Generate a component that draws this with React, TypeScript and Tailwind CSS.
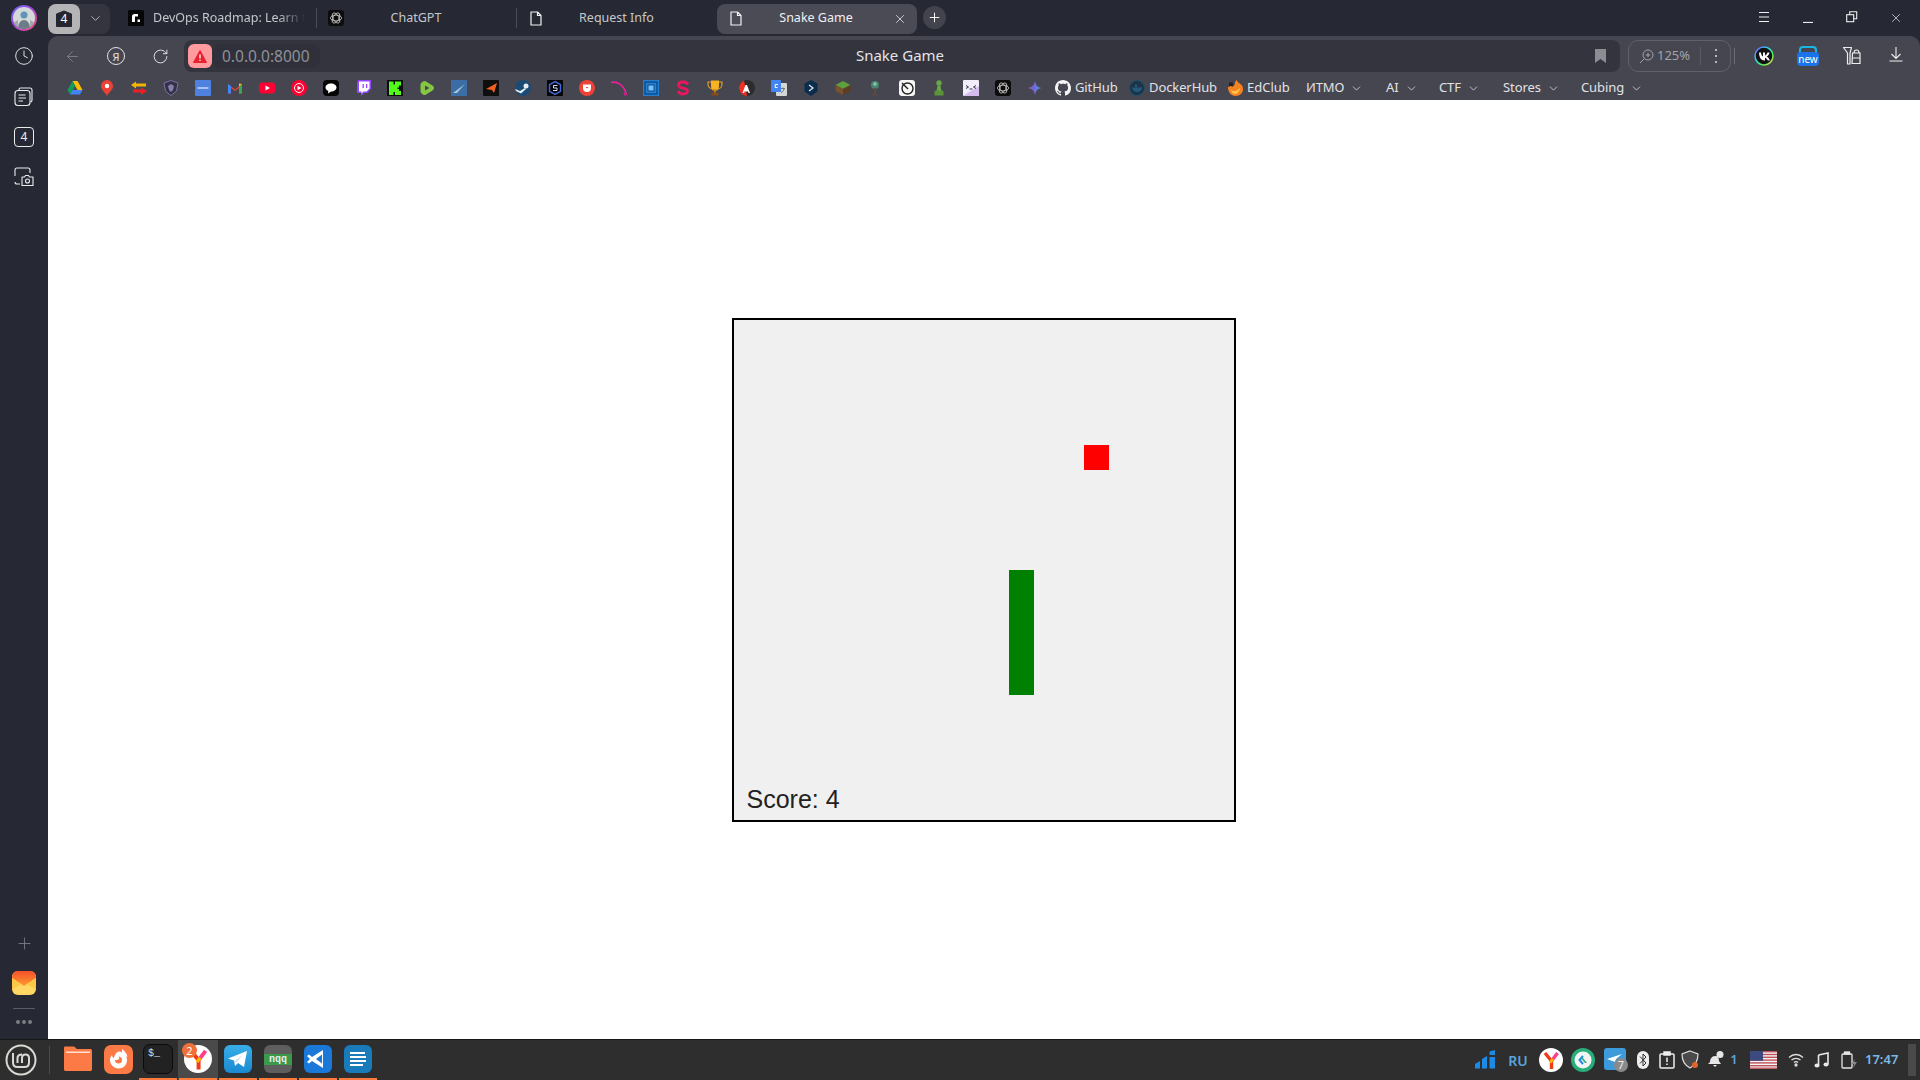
import React from "react";
import { ArrowLeft, ChevronDown, Clock, Plus, RotateCw, X } from "lucide-react";

const Svg = ({ s = 16, vb = "0 0 16 16", children }: { s?: number; vb?: string; children: React.ReactNode }) => (
  <svg width={s} height={s} viewBox={vb} className="block shrink-0">{children}</svg>
);

const PageIcon = () => (
  <svg width="12" height="15" viewBox="0 0 12 15" className="block shrink-0"><path d="M1 1h6.5L11 4.5V14H1z M7.5 1v3.5H11" fill="none" stroke="#f2f2f2" strokeWidth="1.2" strokeLinejoin="round" /></svg>
);

const OpenAi = ({ s = 16 }: { s?: number }) => (
  <Svg s={s}>
    <rect width="16" height="16" rx="3" fill="#0c0c0c" />
    <g fill="none" stroke="#cfcfcf" strokeWidth=".8">
      <ellipse cx="8" cy="8" rx="5.6" ry="2.9" />
      <ellipse cx="8" cy="8" rx="5.6" ry="2.9" transform="rotate(60 8 8)" />
      <ellipse cx="8" cy="8" rx="5.6" ry="2.9" transform="rotate(120 8 8)" />
    </g>
  </Svg>
);

const favs: React.ReactNode[] = [
  <Svg key="drive"><path d="M5.5 1h5l5 9h-5z" fill="#fbbc04" /><path d="M5.5 1 .5 10 3 14.5 8 6z" fill="#0f9d58" /><path d="M3 14.5h10l2.500-4.500h-10z" fill="#4285f4" /></Svg>,
  <Svg key="pin"><path d="M8 0a6 6 0 0 1 6 6c0 4-4 6-6 10C6 12 2 10 2 6a6 6 0 0 1 6-6z" fill="#ea4335" /><circle cx="8" cy="6" r="2.200" fill="#fff" /></Svg>,
  <Svg key="arrows"><path d="M0 5 5 1.500V3.500H15V6.500H5V8.500z" fill="#f5b400" /><path d="M16 11 10 7.500V9.500H2V12.500H10V15z" fill="#ee1c25" /></Svg>,
  <Svg key="shield"><path d="M8 .500 15 3l-1.500 8L8 15.500 2.500 11 1 3z" fill="#343048" stroke="#7a74a0" /><path d="M8 4l3 2-1 4-2 2-2-2-1-4z" fill="#8680aa" /></Svg>,
  <Svg key="dpgs"><rect width="16" height="16" rx="1" fill="#4f82e0" /><rect x="2.500" y="7" width="11" height="2" fill="#a9c2f2" /></Svg>,
  <Svg key="gmail"><path d="M1 13.500V4l7 5.500L15 4v9.500h-3V8L8 11 4 8v5.500z" fill="#ea4335" /><path d="M1 4v9.500h3V6z" fill="#4285f4" /><path d="M15 4v9.500h-3V6z" fill="#34a853" /><path d="M12 6.500 15 4v0l-3-.5z" fill="#fbbc04" /></Svg>,
  <Svg key="yt"><rect y="2.500" width="16" height="11" rx="3" fill="#ff0033" /><path d="M6.500 5.500 11 8l-4.500 2.500z" fill="#fff" /></Svg>,
  <Svg key="ytm"><circle cx="8" cy="8" r="8" fill="#ff0033" /><circle cx="8" cy="8" r="4.500" fill="none" stroke="#fff" /><path d="M6.500 5.800 10.500 8l-4 2.200z" fill="#fff" /></Svg>,
  <Svg key="chat"><rect width="16" height="16" rx="4" fill="#050505" /><path d="M8 3.500c3.300 0 5.500 1.700 5.500 4S11.300 11.500 8 11.500l-3 2 .3-2.500C3.500 10.300 2.500 9 2.500 7.500c0-2.300 2.200-4 5.500-4z" fill="#fff" /></Svg>,
  <Svg key="twitch"><path d="M3 0h13v9l-4 4H9l-3 3v-3H2V3z" fill="#9146ff" /><path d="M4 1.500h10.500v7l-3 3H8.500L6.500 13.500V11.500H4z" fill="#fff" /><path d="M7.500 4h1.300v4H7.500zM11 4h1.300v4H11z" fill="#9146ff" /></Svg>,
  <Svg key="kick"><rect width="16" height="16" fill="#0b0e0f" /><path d="M2 1.500h4.500v3h1.500v-3h6v4h-2v2h-1.500v1.500h1.500v2h2v4h-6v-3H6.500v3H2z" fill="#53fc18" /></Svg>,
  <Svg key="rumble"><path d="M4 1.500c1-.8 2-.8 3 0l6.500 4c2 1.300 2 3.700 0 5l-6.500 4c-1 .8-2 .8-3 0-1.500-1-2.500-2-2.500-3.500v-6C1.500 3.500 2.500 2.500 4 1.500z" fill="#85c742" /><path d="M6 5.500 10.500 8 6 10.500z" fill="#45474f" /></Svg>,
  <Svg key="swoosh"><rect width="16" height="16" fill="#3a6ea5" /><path d="M2 13 14 4 6 13z" fill="#a9c6de" /></Svg>,
  <Svg key="blackorange"><rect width="16" height="16" rx="1" fill="#0e0e0e" /><path d="M3 9 14 3l-3 10-2-3z" fill="#f2621f" /></Svg>,
  <Svg key="steam"><circle cx="8" cy="8" r="8" fill="#1b4a75" /><circle cx="11" cy="6" r="2.500" fill="#e8edf2" /><path d="M0 9l5 2 5-3 1 1-5 4.500L1 11z" fill="#e8edf2" /></Svg>,
  <Svg key="hexs"><rect width="16" height="16" rx="1" fill="#050505" /><path d="M8 1.500 13.500 4.700v6.600L8 14.500 2.500 11.300V4.700z" fill="none" stroke="#4466dd" strokeWidth="1.500" /><path d="M10.500 5.500h-4v2.500h3.500v2.500H6" fill="none" stroke="#d0d8ff" /></Svg>,
  <Svg key="pocket"><circle cx="8" cy="8" r="8" fill="#ef4135" /><path d="M4 4.500h8v3.500a4 4 0 0 1-8 0z" fill="#fff" /><path d="M6.500 7h3L8 8.500z" fill="#ef4135" /></Svg>,
  <Svg key="arc"><path d="M0 2.500C6 1 12.500 5 15 13" fill="none" stroke="#ef1fa0" strokeWidth="1.600" /><circle cx="14.500" cy="14" r="1.300" fill="none" stroke="#ef1fa0" /></Svg>,
  <Svg key="bluesq"><rect width="16" height="16" fill="#2380d0" /><rect x="2" y="2" width="12" height="12" fill="none" stroke="#0e4d8c" strokeWidth="1.500" /><rect x="5" y="5" width="6" height="6" fill="#7cc0f4" stroke="#0e4d8c" /></Svg>,
  <Svg key="s"><path d="M13 4.500C12 2.500 10 2 8 2 5.500 2 3.500 3 3.500 5c0 4.500 9 2 9 6 0 2-2 3-4.500 3-2.300 0-4-1-5-3" fill="none" stroke="#e8175d" strokeWidth="2.800" /></Svg>,
  <Svg key="trophy"><path d="M1 2h14v2c0 3-2 4.500-3.500 4.500L10 10H6L4.500 8.500C3 8.500 1 7 1 4z" fill="none" stroke="#e59a1c" strokeWidth="1.200" /><path d="M4 0.500h8V6c0 2.500-2 4-4 4S4 8.500 4 6z" fill="#f6b323" /><path d="M7 9.500h2v3H7z" fill="#c97b17" /><path d="M4.500 13h7v2.500h-7z" fill="#8a4b16" /></Svg>,
  <Svg key="a35"><circle cx="8" cy="8" r="8" fill="#2c2c2f" /><path d="M8 16A8 8 0 0 1 5 .600z" fill="#ee3124" /><path d="M3.500 13 6.500 5h1.500l3 8H9.500l-.5-1.500H5.500L5 13z" fill="#fff" /></Svg>,
  <Svg key="gt"><rect x="5" y="3" width="11" height="13" rx="1" fill="#d6d6d6" /><rect width="10" height="12" rx="1" fill="#4285f4" /><path d="M7 4.500H4.200V7.500H6.500" fill="none" stroke="#fff" /><path d="M10 8.500h4M12 7.500v1M13 9c-.500 2-1.500 3-3 3.500" fill="none" stroke="#777" /></Svg>,
  <Svg key="darkhex"><path d="M8 0 14.500 3.500v8L8 16 1.500 11.500v-8z" fill="#0c2c4b" /><path d="M6 5 10 8 6 11" fill="none" stroke="#d8e6f2" strokeWidth="1.300" /></Svg>,
  <Svg key="mc"><path d="M8 1 15.500 5 8 9 .5 5z" fill="#5fa03a" /><path d="M.5 5 8 9v6L.5 11z" fill="#7a5230" /><path d="M15.500 5 8 9v6l7.500-4z" fill="#5d3e24" /></Svg>,
  <Svg key="tree"><circle cx="8" cy="5" r="4" fill="#4a8572" /><circle cx="8" cy="4" r="1.800" fill="#8fc4a8" /><rect x="7" y="8" width="2" height="6" fill="#5a4a42" /><rect x="5" y="14" width="6" height="1.500" fill="#5a4a42" /></Svg>,
  <Svg key="grafana"><rect width="16" height="16" rx="3" fill="#f6f6f6" /><circle cx="8.500" cy="8.500" r="5.500" fill="none" stroke="#222" strokeWidth="1.400" /><path d="M3 3 9 9" stroke="#222" strokeWidth="1.400" /></Svg>,
  <Svg key="pawn"><circle cx="8" cy="3" r="2.700" fill="#69a644" /><path d="M6.500 5.500h3L10.500 11h-5z" fill="#69a644" /><path d="M3.500 12c0-1 1-1.500 2-1.500h5c1 0 2 .5 2 1.500v3.500h-9z" fill="#5b9339" /></Svg>,
  <Svg key="purple"><rect width="16" height="16" rx="1" fill="#f2ecfb" /><path d="M0 16 16 16V6z" fill="#d4bcee" /><path d="M3 5.500 5.500 7 3 8.500M13 5.500 10.500 7 13 8.500M6.500 9h3" fill="none" stroke="#23233a" strokeWidth=".9" /></Svg>,
  <OpenAi key="oai" />,
  <Svg key="gem"><path d="M8 1c.6 4 2.500 6.200 7 7-4.500.8-6.400 3-7 7-.6-4-2.500-6.200-7-7 4.500-.8 6.400-3 7-7z" fill="#5a7fe0" /><path d="M8 1c-.6 4-2.500 6.200-7 7 4.500.8 6.400 3 7 7z" fill="#7a62c8" /></Svg>,
];

const Chevron = () => <ChevronDown size={13} strokeWidth={1.500} className="text-[#d8d8dc] shrink-0" />;

const Ya = ({ s = 24 }: { s?: number }) => (
  <Svg s={s} vb="0 0 24 24">
    <circle cx="12" cy="12" r="12" fill="#fff" />
    <path d="M12.500 21v-8L6 5" fill="none" stroke="#f03a17" strokeWidth="3.400" />
    <path d="M12.500 13 18.500 5" fill="none" stroke="#ff3d8b" strokeWidth="3.400" />
    <path d="M11 14.500 14 11" stroke="#ffb400" strokeWidth="3" />
  </Svg>
);

function TabStrip() {
  return (
    <div className="h-9 flex items-center shrink-0 text-[12.5px] text-[#c6c7cb]">
      <div className="w-[62px] h-[30px] flex rounded-lg bg-[#34353f] mt-px">
        <div className="w-8 h-full rounded-lg bg-[#b4b4b6] flex items-center justify-center">
          <div className="relative w-4 h-4 flex items-center justify-center">
            <svg width="18" height="18" viewBox="0 0 18 18" className="absolute -left-px -top-px"><path d="M9 1 16.500 4V16.500H1.500V4z" fill="#23262f" strokeLinejoin="round" stroke="#23262f" /></svg>
            <span className="relative text-white text-xs leading-none">4</span>
          </div>
        </div>
        <div className="flex-1 flex items-center justify-center"><ChevronDown size={15} strokeWidth={1.500} className="text-[#b8b8bc]" /></div>
      </div>
      <div className="ml-2 w-[198px] pl-2.5 flex items-center">
        <svg width="16" height="16" viewBox="0 0 16 16" className="block shrink-0"><rect width="16" height="16" rx="1.500" fill="#050505" /><path d="M4 12V6.500C4 5 5 4 6.500 4H10v2.400H7V12z" fill="#fff" /><rect x="9.500" y="9.500" width="2.500" height="2.500" fill="#fff" /></svg>
        <span className="ml-[9px] mt-px w-[152px] whitespace-nowrap overflow-hidden [mask-image:linear-gradient(to_right,black_82%,transparent)]">DevOps Roadmap: Learn t</span>
      </div>
      <div className="w-px h-5 bg-[#4b4c55]" />
      <div className="w-[199px] pl-[11px] pr-7 flex items-center">
        <OpenAi />
        <span className="flex-1 mt-px text-center">ChatGPT</span>
      </div>
      <div className="w-px h-5 bg-[#4b4c55]" />
      <div className="w-[200px] pl-[11px] pr-7 flex items-center">
        <span className="w-4 flex justify-center"><PageIcon /></span>
        <span className="flex-1 mt-px text-center">Request Info</span>
      </div>
      <div className="w-[200px] h-[30px] mt-px pl-[11px] flex items-center rounded-lg bg-[#4a4b55] text-[#f0f0f2]">
        <span className="w-4 flex justify-center"><PageIcon /></span>
        <span className="w-36 text-center">Snake Game</span>
        <span className="w-6 flex justify-center"><X size={14} strokeWidth={1.300} /></span>
      </div>
      <div className="ml-1.5 mb-px w-[23px] h-[23px] rounded-full bg-[#42434d] flex items-center justify-center">
        <Plus size={15} strokeWidth={1.500} className="text-white" />
      </div>
      <div className="ml-auto pr-0.5 flex text-[#f0f0f0]">
        <span className="w-11 flex justify-center"><svg width="12" height="12" viewBox="0 0 12 12"><path d="M1 1.500h10M1 6h10M1 10.500h10" stroke="#f0f0f0" strokeWidth="1" /></svg></span>
        <span className="w-11 flex justify-center"><svg width="12" height="12" viewBox="0 0 12 12"><path d="M1 11.500h10" stroke="#f0f0f0" strokeWidth="1.200" /></svg></span>
        <span className="w-11 flex justify-center"><svg width="12" height="12" viewBox="0 0 12 12" fill="none" stroke="#f0f0f0" strokeWidth="1.100"><rect x=".7" y="3.700" width="7" height="7" /><path d="M3.700 3.700V.7h7v7H7.700" /></svg></span>
        <span className="w-11 flex justify-center"><X size={14} strokeWidth={1.200} /></span>
      </div>
    </div>
  );
}

function AddressRow() {
  return (
    <div className="h-8 mt-1 flex items-center shrink-0">
      <span className="w-12 flex justify-center"><ArrowLeft size={17} strokeWidth={1.200} className="text-[#83848c]" /></span>
      <span className="w-10 flex justify-center">
        <span className="w-[18px] h-[18px] rounded-full border border-[#e4e4e6] text-[#e4e4e6] text-[11px] leading-none flex items-center justify-center">Я</span>
      </span>
      <span className="w-12 flex justify-center"><RotateCw size={17} strokeWidth={1.300} className="text-[#e8e8ea]" /></span>
      <div className="flex-1 h-8 rounded-lg bg-[#33343e] grid grid-cols-[1fr_auto_1fr] items-center pr-1">
        <div className="flex items-center pl-1">
          <span className="w-6 h-6 rounded-md bg-[#ff9a9e] flex items-center justify-center">
            <svg width="14" height="13" viewBox="0 0 14 13"><path d="M7 .5 13.500 12.500H.5z" fill="#e5222d" stroke="#e5222d" strokeLinejoin="round" /><path d="M7 4.500v4M7 9.800v1.200" stroke="#fff" strokeWidth="1.300" /></svg>
          </span>
          <span className="h-6 pl-[9px] pr-2.5 ml-px rounded-lg bg-[#2f303a] text-[#8f9097] text-[15.500px] leading-6">0.0.0.0:8000</span>
        </div>
        <span className="mb-0.5 text-[15px] text-[#e4e4e6] leading-none">Snake Game</span>
        <div className="flex justify-end pr-2.5">
          <svg width="11" height="14" viewBox="0 0 11 14"><path d="M0 0h11v14L5.500 10 0 14z" fill="#8c8d93" /></svg>
        </div>
      </div>
      <div className="ml-2 w-[103px] h-8 rounded-[10px] border border-[#5f6068] flex items-center text-[13px] text-[#a2a3a9]">
        <svg width="15" height="15" viewBox="0 0 15 15" className="ml-2.5 shrink-0" fill="none" stroke="#a2a3a9" strokeWidth="1"><circle cx="9" cy="6" r="5" /><path d="M5.300 9.700 1 14M9 3.800v4.400M6.800 6h4.400" /></svg>
        <span className="ml-[3px]">125%</span>
        <span className="ml-2.5 w-px h-[18px] bg-[#5a5b63]" />
        <span className="flex-1 flex flex-col items-center gap-[4px]">
          <i className="block w-[2px] h-[2px] bg-[#b4b5ba]" /><i className="block w-[2px] h-[2px] bg-[#b4b5ba]" /><i className="block w-[2px] h-[2px] bg-[#b4b5ba]" />
        </span>
      </div>
      <span className="ml-[3px] w-px h-4 bg-[#6a6b73]" />
      <div className="ml-[7px] mr-0.5 flex">
        <span className="w-11 flex justify-center">
          <svg width="20" height="20" viewBox="0 0 20 20"><circle cx="10" cy="10" r="9" fill="#111" stroke="url(#rb)" strokeWidth="1.500" /><defs><linearGradient id="rb" x1="0" y1="0" x2="1" y2="1"><stop offset="0" stopColor="#8b3dff" /><stop offset=".35" stopColor="#2dd4ff" /><stop offset=".65" stopColor="#3df06a" /><stop offset="1" stopColor="#ffd23d" /></linearGradient></defs><path d="M5 6.500h2c.2 2.500 1 3.500 2 4V6.500h2v3c1-.2 2-1.500 2.500-3h2c-.4 2-1.500 3.500-2.800 4.200 1.300.6 2.600 1.800 3.200 3.800h-2.200c-.5-1.500-1.600-2.600-2.700-2.800v2.800h-.5C7 14.500 5.200 11.500 5 6.500z" fill="#fff" /></svg>
        </span>
        <span className="w-11 flex justify-center">
          <span className="relative w-[22px] h-[20px]">
            <span className="absolute left-0.5 right-0.5 top-0 h-2 rounded-t border-t-2 border-x-2 border-[#18b6e6]" />
            <span className="absolute left-0 right-0 bottom-0 h-[14px] rounded bg-[#1a73e8] text-white text-[10px] leading-[14px] text-center">new</span>
          </span>
        </span>
        <span className="w-11 flex justify-center">
          <svg width="20" height="20" viewBox="0 0 20 20" fill="none" stroke="#eee" strokeWidth="1.200"><path d="M1.500 1.500h8L8 7v11H5.500V7z" strokeLinejoin="round" /><path d="M10.500 7h7.500v10.500H10zM10.500 12h7.500M12 7c0-2 1-3 2.500-3S17 5 17 7" /></svg>
        </span>
        <span className="w-11 flex justify-center">
          <svg width="14" height="16" viewBox="0 0 14 16" fill="none" stroke="#eee" strokeWidth="1.100"><path d="M7 1v11M2.500 8 7 12.500 11.500 8M.500 15h13" /></svg>
        </span>
      </div>
    </div>
  );
}

function BookmarkRow() {
  const menus: [string, string][] = [["ИТМО", "w-[80px]"], ["AI", "w-[53px]"], ["CTF", "w-[64px]"], ["Stores", "w-[78px]"], ["Cubing", "w-[80px]"]];
  return (
    <div className="h-7 flex items-center pt-1 pl-[11px] shrink-0 text-[13px] text-[#e2e2e5]">
      {favs.map((f, i) => (
        <span key={i} className="w-8 flex justify-center">{f}</span>
      ))}
      <div className="ml-1 w-[74px] flex items-center gap-1">
        <svg width="16" height="16" viewBox="0 0 16 16" className="shrink-0"><path fill="#f4f4f4" d="M8 0C3.580 0 0 3.580 0 8c0 3.540 2.290 6.530 5.470 7.590.4.070.55-.170.55-.380 0-.190-.010-.820-.010-1.490-2.010.370-2.530-.490-2.690-.940-.090-.230-.480-.940-.820-1.130-.280-.150-.680-.520-.010-.530.630-.010 1.080.580 1.230.820.720 1.210 1.870.870 2.330.660.070-.520.280-.870.510-1.070-1.780-.200-3.640-.890-3.640-3.950 0-.870.310-1.590.820-2.150-.080-.200-.360-1.020.080-2.120 0 0 .670-.210 2.200.820.640-.180 1.320-.270 2-.270s1.360.090 2 .270c1.530-1.040 2.200-.820 2.200-.820.440 1.100.160 1.920.080 2.120.510.560.820 1.270.820 2.150 0 3.070-1.870 3.750-3.650 3.950.290.250.540.730.540 1.480 0 1.070-.010 1.930-.010 2.200 0 .210.150.460.550.380A8.010 8.010 0 0 0 16 8c0-4.420-3.580-8-8-8z" /></svg>
        <span className="tracking-[-0.1px]">GitHub</span>
      </div>
      <div className="w-[98px] flex items-center gap-1">
        <svg width="16" height="16" viewBox="0 0 16 16" className="shrink-0"><circle cx="8" cy="8" r="7.500" fill="#1b3446" stroke="#20506e" /><path d="M3 7.500h8c1 0 1.500-.5 2-1 .5 3-2 5.500-5 5.500S3.500 10 3 7.500z" fill="#24597c" /><path d="M6 4.500h2v2.500H6z" fill="#24597c" /></svg>
        <span className="tracking-[-0.1px]">DockerHub</span>
      </div>
      <div className="w-[79px] flex items-center gap-1">
        <svg width="16" height="16" viewBox="0 0 16 16" className="shrink-0"><path d="M1 7c1 0 2-.5 2.500-1.500.5 1 1.500 1.500 2.500 1s2-2 2-4C8 1.500 9 .5 10 0c0 2 1.500 2.500 3.500 4 2 1.500 2.500 3.500 2.500 5 0 4-3 7-7.500 7S1 12 1 7z" fill="#f58220" /><path d="M4 10c2 1.500 6 1.500 9-2-.5 3.500-2.500 6-5 6s-3.500-2-4-4z" fill="#ffc24a" /><rect x="2" y="2.500" width="4" height="3.500" fill="#222" /></svg>
        <span>EdClub</span>
      </div>
      {menus.map(([t, w]) => (
        <div key={t} className={`${w} flex items-center gap-[6px]`}>
          <span className="tracking-[-0.1px]">{t}</span>
          <Chevron />
        </div>
      ))}
    </div>
  );
}

function Sidebar() {
  return (
    <aside className="w-12 shrink-0 flex flex-col items-center bg-[#262933]">
      <div className="h-9 flex items-center justify-center">
        <div className="w-[26px] h-[26px] rounded-full p-[2px] bg-[linear-gradient(135deg,#6a6cf0,#a04ae0_45%,#f0486e)]">
          <svg viewBox="0 0 22 22" className="block w-full h-full rounded-full"><rect width="22" height="22" fill="#d3d8d8" /><circle cx="11" cy="8" r="3.500" fill="#5f93b8" /><path d="M5 22c0-6 3-9 6-9s6 3 6 9z" fill="#6d7c88" /><path d="M0 16 5 13v9H0zM22 16l-5-3v9h5z" fill="#a0a8a8" /></svg>
        </div>
      </div>
      <div className="h-10 flex items-center justify-center"><Clock size={20} strokeWidth={1.100} className="text-[#ececee]" /></div>
      <div className="h-[41px] flex items-center justify-center">
        <svg width="20" height="20" viewBox="0 0 20 20" fill="none" stroke="#ececee" strokeWidth="1.100"><path d="M5 3V2.500c0-1 .5-1.500 1.500-1.500h9.500c1 0 2 1 2 2v10c0 1-.5 2-1.500 2" /><rect x="1" y="3.500" width="15" height="15" rx="3" fill="#262933" /><path d="M4.500 8h7M4.500 11h7.500M4.500 14h4.500" /></svg>
      </div>
      <div className="h-[39px] flex items-center justify-center">
        <span className="w-5 h-5 rounded border border-[#ececee] text-[#ececee] text-xs leading-none flex items-center justify-center">4</span>
      </div>
      <div className="h-[41px] flex items-center justify-center">
        <svg width="20" height="20" viewBox="0 0 20 20" fill="none" stroke="#ececee" strokeWidth="1.100"><path d="M1 9V3c0-1.200.8-2 2-2h11c1.200 0 2 .8 2 2v3M6 17H3c-1 0-2-1-2-2" /><path d="M8 10h2.500l1-1.500h3L15.500 10H19v8.500H8z" fill="#262933" strokeLinejoin="round" /><circle cx="13.500" cy="14" r="2" /></svg>
      </div>
      <div className="mt-auto flex flex-col items-center">
        <Plus size={19} strokeWidth={1} className="text-[#84858d] mb-[18px]" />
        <svg width="24" height="24" viewBox="0 0 24 24"><defs><linearGradient id="m" x1="0" y1="0" x2="0" y2="1"><stop offset="0" stopColor="#f4502a" /><stop offset="1" stopColor="#ff9a2e" /></linearGradient></defs><rect width="24" height="24" rx="6" fill="#ffd863" /><path d="M6 0h12c3.500 0 6 2.500 6 6v1l-12 8L0 7V6c0-3.500 2.500-6 6-6z" fill="url(#m)" /><path d="M0 7l9 6-9 6zM24 7l-9 6 9 6z" fill="#fcc745" /></svg>
        <span className="block w-[22px] h-px bg-[#5b5c64] mt-[13px]" />
        <span className="flex gap-[2px] mt-[11px] mb-[15px]">
          <i className="block w-1 h-1 rounded-full bg-[#7c7d85]" /><i className="block w-1 h-1 rounded-full bg-[#7c7d85]" /><i className="block w-1 h-1 rounded-full bg-[#7c7d85]" />
        </span>
      </div>
    </aside>
  );
}

function Game() {
  return (
    <main className="flex-1 min-h-0 bg-white flex items-center justify-center">
      <div className="relative w-[504px] h-[504px] border-2 border-black bg-[#f0f0f0] font-['Liberation_Sans',sans-serif]">
        <div className="absolute left-[350px] top-[125px] w-[25px] h-[25px] bg-[#ff0000]" />
        <div className="absolute left-[275px] top-[250px] w-[25px] h-[125px] bg-[#008000]" />
        <span className="absolute left-[12.500px] bottom-[6px] text-[25px] leading-[30px] text-[#222]">Score: 4</span>
      </div>
    </main>
  );
}

function TaskSlot({ children, open, active }: { children: React.ReactNode; open?: boolean; active?: boolean }) {
  return (
    <div className={`relative w-10 h-[40px] pb-0.5 flex items-center justify-center ${active ? "bg-[#4a4a4a]" : ""}`}>
      {children}
      {open && <span className="absolute left-px right-px bottom-0 h-0.5 bg-[#fb7a3c]" />}
    </div>
  );
}

function Taskbar() {
  return (
    <footer className="h-[41px] shrink-0 border-t border-[#171717] bg-[#2e2e2e] flex items-center text-[#5aa4dc]">
      <div className="w-[42px] flex justify-center">
        <svg width="32" height="32" viewBox="0 0 32 32" fill="none" stroke="#d8d8d4" strokeWidth="2"><circle cx="16" cy="16" r="14.500" /><path d="M8 9v9.500c0 3 2 4.500 4.500 4.500h7c2.500 0 4.500-1.500 4.500-4.500V14c0-2-1.500-3.500-3.500-3.500S17 12 17 14v5M12.500 19v-5c0-2 1.500-3.500 4.500-3.500" /></svg>
      </div>
      <span className="ml-[7px] w-px h-[28px] bg-[#4a4a4a]" />
      <div className="ml-[8px] flex self-start">
        <TaskSlot>
          <svg width="30" height="26" viewBox="0 0 30 26"><path d="M1 2c0-1 .5-1.500 1.500-1.500H11L14 3h13c1.500 0 2 .5 2 2v18c0 1.500-.5 2-2 2H3c-1.500 0-2-.5-2-2z" fill="#fb7a46" /><path d="M3 7h24V5.500H3z" fill="#ffe0d0" /></svg>
        </TaskSlot>
        <TaskSlot>
          <svg width="29" height="29" viewBox="0 0 29 29"><rect width="29" height="29" rx="7" fill="#fb7a46" /><path d="M14.500 6.500c4.500 0 8.500 3.500 8.500 8.500s-4 8.500-8.500 8.500S6 19.500 6 15c0-2 .8-3.500 2-5 0 1.500.8 2.500 2 3 .5-3 2-5.500 4.500-6.500z" fill="#fff" /><path d="M11 15a3.500 3.500 0 1 0 7 0c0-2-1.500-3.500-3.500-3.500 1 1 1 2.500 0 3-1 .5-2.500.5-3.500.5z" fill="#fb7a46" /><path d="M18 4c3 2 5 5 5.500 8L18 9z" fill="#fff" /></svg>
        </TaskSlot>
        <TaskSlot open>
          <div className="w-[30px] h-[30px] rounded-[7px] bg-[#222] border border-[#0a0a0a] text-[#ddd] text-[10px] leading-none font-['Liberation_Mono',monospace] pl-1 pt-1">$_</div>
        </TaskSlot>
        <TaskSlot open active>
          <div className="relative w-7"><Ya s={28} />
            <span className="absolute -left-[2px] -top-[2px] w-[15px] h-[15px] rounded-full bg-[#f0703a] text-white text-[11px] leading-[15px] text-center">2</span>
          </div>
        </TaskSlot>
        <TaskSlot open>
          <svg width="28" height="28" viewBox="0 0 28 28"><defs><linearGradient id="tg" x1="0" y1="0" x2="0" y2="1"><stop offset="0" stopColor="#38aee8" /><stop offset="1" stopColor="#1a8ad0" /></linearGradient></defs><rect width="28" height="28" rx="6" fill="url(#tg)" /><path d="M4 13.500 23 6l-3 16-6-4-3 3-1-5.500z" fill="#fff" /><path d="M10 16.500 19 10l-7 7.500z" fill="#c4dff0" /></svg>
        </TaskSlot>
        <TaskSlot open>
          <div className="w-7 h-7 rounded-md bg-[#5e5e5e] flex flex-col justify-center overflow-hidden">
            <span className="bg-[#3a9a4a] text-[#eaeaea] text-[10px] h-[11px] leading-[11px] text-center font-['Liberation_Mono',monospace] font-bold">nqq</span>
          </div>
        </TaskSlot>
        <TaskSlot open>
          <svg width="28" height="28" viewBox="0 0 28 28"><rect width="28" height="28" rx="6" fill="#1a78d8" /><path d="M19 5v18L8 16l-3 2.500L3 17l3-3-3-3 2-1.500L8 12z" fill="#fff" /><path d="M18 9.500 12 14l6 4.500z" fill="#1a78d8" /></svg>
        </TaskSlot>
        <TaskSlot open>
          <svg width="28" height="28" viewBox="0 0 28 28"><rect width="28" height="28" rx="6" fill="#1a7bba" /><path d="M6 8h15M6 12h16M6 16h16M6 20h13" stroke="#fff" strokeWidth="1.800" /></svg>
        </TaskSlot>
      </div>
      <div className="ml-auto flex items-center mr-1">
        <svg width="21" height="20" viewBox="0 0 21 20" fill="#1d8ae6"><path d="M0 14 5 11v7.500H0zM7 9l5-3v12.500H7zM14.500 7H20v11.500h-5.500zM14.500 1.500 20 0v5h-5.500z" /></svg>
        <span className="ml-[8px] w-7 text-center text-[14px] font-semibold">RU</span>
        <span className="ml-[7px]"><Ya s={24} /></span>
        <span className="ml-[8px]">
          <svg width="24" height="24" viewBox="0 0 24 24"><circle cx="12" cy="12" r="12" fill="#27ae7a" /><circle cx="12" cy="12" r="8.500" fill="#f4f4f4" /><path d="M12 8 8.500 12l3.500 4" fill="none" stroke="#1d8ae6" strokeWidth="2" /><path d="M9.500 9.500h2L16 15h-2z" fill="#27ae7a" /></svg>
        </span>
        <span className="ml-[9px] relative w-6 h-6">
          <svg width="22" height="22" viewBox="0 0 22 22"><rect width="22" height="22" rx="3" fill="#3d9bdc" /><path d="M3 11 18 6l-6 5-1 3z" fill="#fff" /></svg>
          <span className="absolute right-0 bottom-0 w-[14px] h-[14px] rounded-full bg-[#8a8a8a] text-[#eee] text-[11px] leading-[14px] text-center">7</span>
        </span>
        <span className="ml-[9px] w-3">
          <svg width="12" height="18" viewBox="0 0 12 18"><rect width="12" height="18" rx="6" fill="#eee" /><path d="M3 5.500 9 12l-3 3V3l3 3-6 6.500" fill="none" stroke="#2e2e2e" strokeWidth="1" /></svg>
        </span>
        <span className="ml-[10px]">
          <svg width="16" height="18" viewBox="0 0 16 18" fill="none" stroke="#eee" strokeWidth="1.500"><rect x="1" y="3" width="14" height="14" rx="1" /><rect x="5" y="1" width="6" height="3" fill="#eee" /><path d="M8 6.500V11M8 12.500V14" /></svg>
        </span>
        <span className="ml-[6px]">
          <svg width="20" height="20" viewBox="0 0 20 20"><path d="M9 1 17 4c0 6-2 11-8 14C3 15 1 10 1 4z" fill="#4a4a4a" stroke="#ddd" strokeWidth="1.200" /><circle cx="14" cy="15" r="3" fill="#e0662e" /></svg>
        </span>
        <span className="ml-[5px]">
          <svg width="20" height="20" viewBox="0 0 20 20"><path d="M9 6c3 0 4 2 4 5l2 3H2l2-2c0-3 2-6 5-6zM7 15h4l-2 2z" fill="#e6e6e6" /><circle cx="14" cy="4.500" r="3.500" fill="#e6e6e6" /></svg>
        </span>
        <span className="ml-1 w-2 text-center text-[13px] font-semibold">1</span>
        <span className="ml-3">
          <svg width="27" height="18" viewBox="0 0 27 18"><rect width="27" height="18" fill="#f4f4f4" />{[0, 2.800, 5.600, 8.400, 11.200, 14, 16.500].map((y) => <rect key={y} y={y} width="27" height="1.400" fill="#c0505a" />)}<rect width="13" height="9.800" fill="#3d4a80" /></svg>
        </span>
        <span className="ml-[11px]">
          <svg width="16" height="14" viewBox="0 0 16 14" fill="none" stroke="#ddd" strokeWidth="1.300"><path d="M1 4.500c4-4 10-4 14 0M3.500 7c2.500-2.300 6.500-2.300 9 0M6 9.500c1-1 3-1 4 0" /><circle cx="8" cy="12" r="1" fill="#ddd" /></svg>
        </span>
        <span className="ml-[10px]">
          <svg width="16" height="16" viewBox="0 0 16 16"><path d="M4.500 3 14 1v11.500" fill="none" stroke="#e8e8e8" strokeWidth="1.600" /><path d="M4.500 3v10" stroke="#e8e8e8" strokeWidth="1.600" /><ellipse cx="3" cy="13.500" rx="2.500" ry="2" fill="#e8e8e8" /><ellipse cx="12" cy="12.500" rx="2.500" ry="2" fill="#e8e8e8" /></svg>
        </span>
        <span className="ml-[11px]">
          <svg width="16" height="18" viewBox="0 0 16 18" fill="none" stroke="#e6e6e6" strokeWidth="1.300"><rect x="1" y="3" width="10" height="14" rx="1" /><rect x="3.500" y="1" width="5" height="2" fill="#e6e6e6" /><path d="M14 8l-4 5h3l-1 4 4-6h-3z" fill="#888" stroke="none" /></svg>
        </span>
        <span className="ml-2 w-[34px] text-[13px] font-semibold whitespace-nowrap text-[#7cb8e6]">17:47</span>
        <span className="ml-[9px] w-2 h-8 bg-[#4a4a4a]" />
      </div>
    </footer>
  );
}

export default function App() {
  return (
    <div className="w-screen h-screen overflow-hidden flex flex-col font-['Noto_Sans',sans-serif]">
      <div className="flex-1 min-h-0 flex">
        <Sidebar />
        <div className="flex-1 min-w-0 flex flex-col bg-[#262933]">
          <TabStrip />
          <div className="shrink-0 rounded-t-[10px] bg-[#464650]">
            <AddressRow />
            <BookmarkRow />
          </div>
          <Game />
        </div>
      </div>
      <Taskbar />
    </div>
  );
}
